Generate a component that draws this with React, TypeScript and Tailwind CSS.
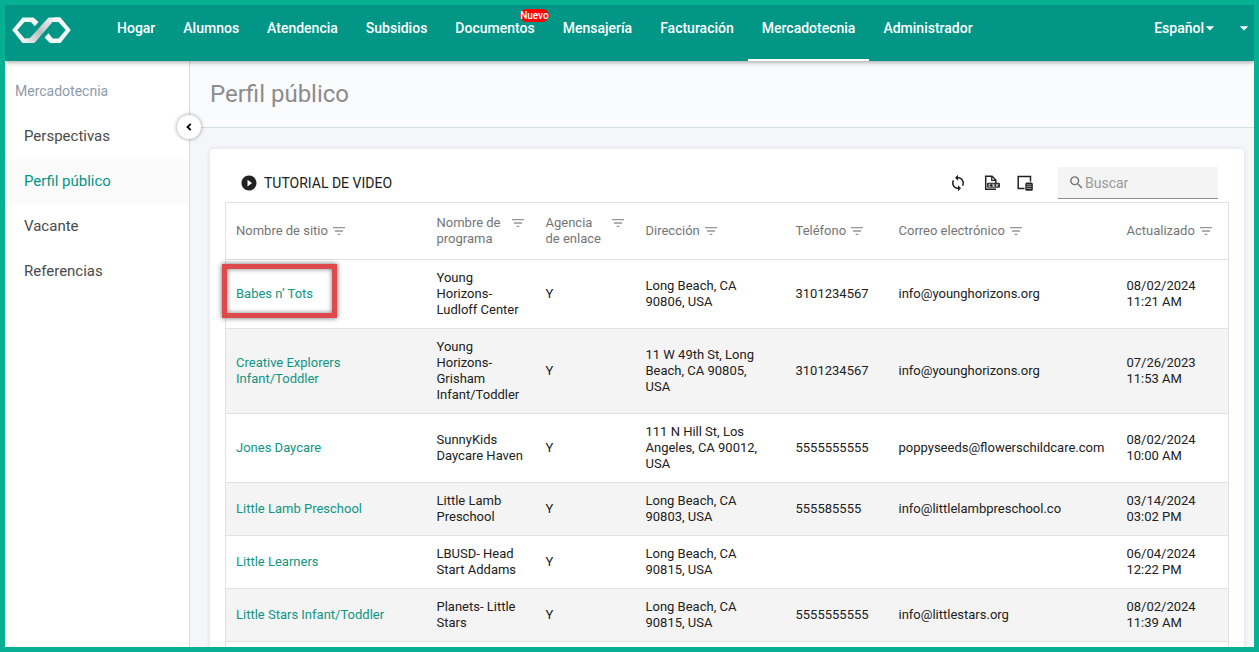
import { useState } from 'react'
import { MdSearch, MdFilterList, MdPlayCircleFilled, MdLoop, MdArrowDropDown } from 'react-icons/md'

interface Site {
  name: string
  program: string
  liaison: string
  address: string
  phone: string
  email: string
  updated: string
  highlighted?: boolean
}

const navItems = [
  { label: 'Hogar' },
  { label: 'Alumnos' },
  { label: 'Atendencia' },
  { label: 'Subsidios' },
  { label: 'Documentos', badge: 'Nuevo' },
  { label: 'Mensajería' },
  { label: 'Facturación' },
  { label: 'Mercadotecnia', active: true },
  { label: 'Administrador' },
]

const sideItems = ['Perspectivas', 'Perfil público', 'Vacante', 'Referencias']

const columns = [
  { label: 'Nombre de sitio', width: 'w-[201px]' },
  { label: 'Nombre de programa', width: 'w-[109px]', wrap: true },
  { label: 'Agencia de enlace', width: 'w-[100px]', wrap: true },
  { label: 'Dirección', width: 'w-[150px]' },
  { label: 'Teléfono', width: 'w-[103px]' },
  { label: 'Correo electrónico', width: 'w-[228px]' },
  { label: 'Actualizado', width: 'w-[112px]' },
]

const sites: Site[] = [
  { name: 'Babes n’ Tots', program: 'Young Horizons-Ludloff Center', liaison: 'Y', address: 'Long Beach, CA 90806, USA', phone: '3101234567', email: 'info@younghorizons.org', updated: '08/02/2024 11:21 AM', highlighted: true },
  { name: 'Creative Explorers Infant/Toddler', program: 'Young Horizons-Grisham Infant/Toddler', liaison: 'Y', address: '11 W 49th St, Long Beach, CA 90805, USA', phone: '3101234567', email: 'info@younghorizons.org', updated: '07/26/2023 11:53 AM' },
  { name: 'Jones Daycare', program: 'SunnyKids Daycare Haven', liaison: 'Y', address: '111 N Hill St, Los Angeles, CA 90012, USA', phone: '5555555555', email: 'poppyseeds@flowerschildcare.com', updated: '08/02/2024 10:00 AM' },
  { name: 'Little Lamb Preschool', program: 'Little Lamb Preschool', liaison: 'Y', address: 'Long Beach, CA 90803, USA', phone: '555585555', email: 'info@littlelambpreschool.co', updated: '03/14/2024 03:02 PM' },
  { name: 'Little Learners', program: 'LBUSD- Head Start Addams', liaison: 'Y', address: 'Long Beach, CA 90815, USA', phone: '', email: '', updated: '06/04/2024 12:22 PM' },
  { name: 'Little Stars Infant/Toddler', program: 'Planets- Little Stars', liaison: 'Y', address: 'Long Beach, CA 90815, USA', phone: '5555555555', email: 'info@littlestars.org', updated: '08/02/2024 11:39 AM' },
]

function Logo() {
  return (
    <svg viewBox="0 0 60 26" className="h-[26px] w-[60px]" aria-hidden="true">
      <defs>
        <linearGradient id="band" gradientUnits="userSpaceOnUse" x1="14" y1="26" x2="44" y2="0">
          <stop offset="0" stopColor="#eceeee" />
          <stop offset="0.45" stopColor="#b9bdbd" />
          <stop offset="0.55" stopColor="#cdd0d0" />
          <stop offset="1" stopColor="#f4f6f6" />
        </linearGradient>
      </defs>
      <path d="M10.500 0.500 H21.500 L26.500 5 L22.800 9.200 L18.800 5 H12.500 L5.300 13 L12.500 21.500 H18 L14 26 H10.500 L0.200 13 Z" fill="#f6f8f8" />
      <path d="M10.500 26 L14 21.500 H17.500 L36.500 0.500 H48.500 L44 5 H40.500 L22.500 26 Z" fill="url(#band)" />
      <path d="M42 0.500 H48.500 L58.800 13 L48.500 26 H38 L32.500 20.500 L36.500 16.300 L40.800 21.500 H46.500 L53.700 13 L46.500 5 H40.500 Z" fill="#f6f8f8" />
    </svg>
  )
}

function CsvIcon() {
  return (
    <svg viewBox="0 0 16 16" className="h-4 w-4" fill="none" stroke="#212121" aria-hidden="true">
      <path d="M12 14.300 H1.700 V1.200 H8 L11.800 5 V8" strokeWidth="1.500" />
      <path d="M7.700 1.500 V5.300 H11.500" strokeWidth="1.200" />
      <rect x="3" y="7.800" width="13" height="5" rx="1" fill="#333" stroke="none" />
      <path d="M6.500 9.300 H5 V11.500 H6.500 M10.300 9.300 H8.700 V10.400 H10.300 V11.500 H8.500 M12 9 L13 11.600 L14 9" stroke="#fff" strokeWidth="0.700" />
    </svg>
  )
}

function ColumnsIcon() {
  return (
    <svg viewBox="0 0 16 16" className="h-4 w-4" fill="none" stroke="#212121" aria-hidden="true">
      <path d="M7.500 13.500 H1.200 V1.500 H13.500 V6.500" strokeWidth="1.500" />
      <rect x="8.300" y="7.500" width="7.500" height="8.300" rx="1.500" fill="#212121" stroke="none" />
      <path d="M9.500 9.800 H14.500 M9.500 11.600 H14.500 M9.500 13.400 H14.500" stroke="#ccc" strokeWidth="0.700" />
    </svg>
  )
}

export default function App() {
  const [activeItem, setActiveItem] = useState('Perfil público')
  const [search, setSearch] = useState('')

  return (
    <div className="flex h-screen flex-col overflow-hidden border-[5px] border-[#07b092] bg-[#f5f6fa] font-['Roboto',sans-serif] text-[#212121]">
      <header className="z-20 flex h-14 shrink-0 items-stretch bg-[#019686] pl-[7px] text-sm font-medium text-white shadow-[0_1px_5px_rgba(0,0,0,0.4)]">
        <a href="#" aria-label="Inicio" className="mr-[31px] flex w-[60px] shrink-0 items-start pt-3">
          <Logo />
        </a>
        <nav className="flex">
          {navItems.map((item) => (
            <a
              key={item.label}
              href="#"
              className={`relative px-[14px] pt-[13px] leading-5 ${item.active ? 'border-b-2 border-white' : ''}`}
            >
              {item.label}
              {item.badge && (
                <span className="absolute top-1 right-0 rounded-full bg-[#fe0000] text-[10px] leading-[13px]">{item.badge}</span>
              )}
            </a>
          ))}
        </nav>
        <div className="ml-auto flex items-start gap-[14px] pt-[13px] leading-5">
          <button type="button" className="flex items-center">
            Español
            <MdArrowDropDown className="-ml-1 h-5 w-5" />
          </button>
          <button type="button" aria-label="Cuenta">
            <MdArrowDropDown className="h-5 w-5" />
          </button>
        </div>
      </header>

      <div className="flex min-h-0 flex-1">
        <aside className="relative z-10 w-[185px] shrink-0 border-r border-[#d9dbdf] bg-white">
          <h2 className="px-[10px] pt-5 text-sm leading-5 text-[#8f9bab]">Mercadotecnia</h2>
          <ul className="mt-[13px]">
            {sideItems.map((item) => (
              <li key={item}>
                <a
                  href="#"
                  onClick={() => setActiveItem(item)}
                  className={`flex h-[45px] items-center pl-[19px] text-[15px] ${
                    activeItem === item ? 'bg-[#fbfbfc] text-[#019686]' : 'text-[#4a4a4a]'
                  }`}
                >
                  {item}
                </a>
              </li>
            ))}
          </ul>
          <button
            type="button"
            aria-label="Contraer menú"
            className="absolute top-[54px] -right-3 flex h-6 w-6 items-center justify-center rounded-full bg-white text-black shadow-[0_0_4px_rgba(0,0,0,0.4)]"
          >
            <svg viewBox="0 0 8 8" className="h-2 w-2" fill="none" stroke="currentColor" strokeWidth="1.800" aria-hidden="true">
              <path d="M5.800 0.800 L2.500 4 L5.800 7.200" />
            </svg>
          </button>
        </aside>

        <main className="min-w-0 flex-1">
          <div className="flex h-[67px] items-center border-b border-[#d3e0e6] bg-[#fafbfd] pl-5">
            <h1 className="text-2xl text-[#8c8c8c]">Perfil público</h1>
          </div>

          <section className="mt-[21px] mr-[10px] ml-5 min-h-screen rounded bg-white pt-[18px] pr-4 pl-[15px] shadow-[0_0_5px_rgba(0,0,0,0.1)]">
            <div className="flex h-8 items-center">
              <button type="button" className="flex items-center gap-[6px] pl-[15px] text-sm uppercase">
                <MdPlayCircleFilled className="h-[18px] w-[18px]" />
                Tutorial de video
              </button>
              <div className="mr-[25px] ml-auto flex items-center gap-[17px]">
                <button type="button" aria-label="Actualizar">
                  <MdLoop className="h-[18px] w-[18px]" />
                </button>
                <button type="button" aria-label="Exportar CSV">
                  <CsvIcon />
                </button>
                <button type="button" aria-label="Columnas">
                  <ColumnsIcon />
                </button>
              </div>
              <label className="mr-[10px] flex h-8 w-40 items-center border-b border-[#8f8f8f] bg-[#f4f4f4] pl-[10px]">
                <MdSearch className="h-[17px] w-[17px] shrink-0 text-[#757575]" aria-label="Buscar" />
                <input
                  type="text"
                  value={search}
                  onChange={(e) => setSearch(e.target.value)}
                  placeholder="Buscar"
                  className="w-full min-w-0 bg-transparent pt-px text-sm outline-none placeholder:text-[#9a9a9a]"
                />
              </label>
            </div>

            <table className="mt-[3px] w-full table-fixed border-collapse border border-[#e2e2e2] text-left text-[13px] leading-4">
              <thead>
                <tr className="h-[57px] border-b border-[#e2e2e2]">
                  {columns.map((col) => (
                    <th key={col.label} className={`px-[10px] font-normal text-[#757575] ${col.width}`}>
                      <div className={`flex ${col.wrap ? 'items-start justify-between' : 'items-center gap-[3px] whitespace-nowrap'}`}>
                        {col.label}
                        <MdFilterList className="h-4 w-4 shrink-0 text-[#959595]" />
                      </div>
                    </th>
                  ))}
                </tr>
              </thead>
              <tbody>
                {sites.map((site) => (
                  <tr key={site.name} className="border-b border-[#e2e2e2] even:bg-[#f4f4f4]">
                    <td className="relative px-[10px] py-[10px]">
                      <a href="#" className="block max-w-[150px] text-[#0f9684]">{site.name}</a>
                      {site.highlighted && (
                        <span className="pointer-events-none absolute top-1 -left-1 h-[54px] w-[115px] border-[5px] border-[#de4a4b] shadow-[0_0_5px_rgba(0,0,0,0.6),inset_0_0_5px_rgba(0,0,0,0.5)]" />
                      )}
                    </td>
                    <td className="px-[10px] py-[10px]">{site.program}</td>
                    <td className="px-[10px] py-[10px]">{site.liaison}</td>
                    <td className="py-[10px] pr-5 pl-[10px]">{site.address}</td>
                    <td className="px-[10px] py-[10px]">{site.phone}</td>
                    <td className="px-[10px] py-[10px]">{site.email}</td>
                    <td className="px-[10px] py-[10px]">{site.updated}</td>
                  </tr>
                ))}
                <tr className="h-[53px]">
                  <td colSpan={columns.length} />
                </tr>
              </tbody>
            </table>
          </section>
        </main>
      </div>
    </div>
  )
}
